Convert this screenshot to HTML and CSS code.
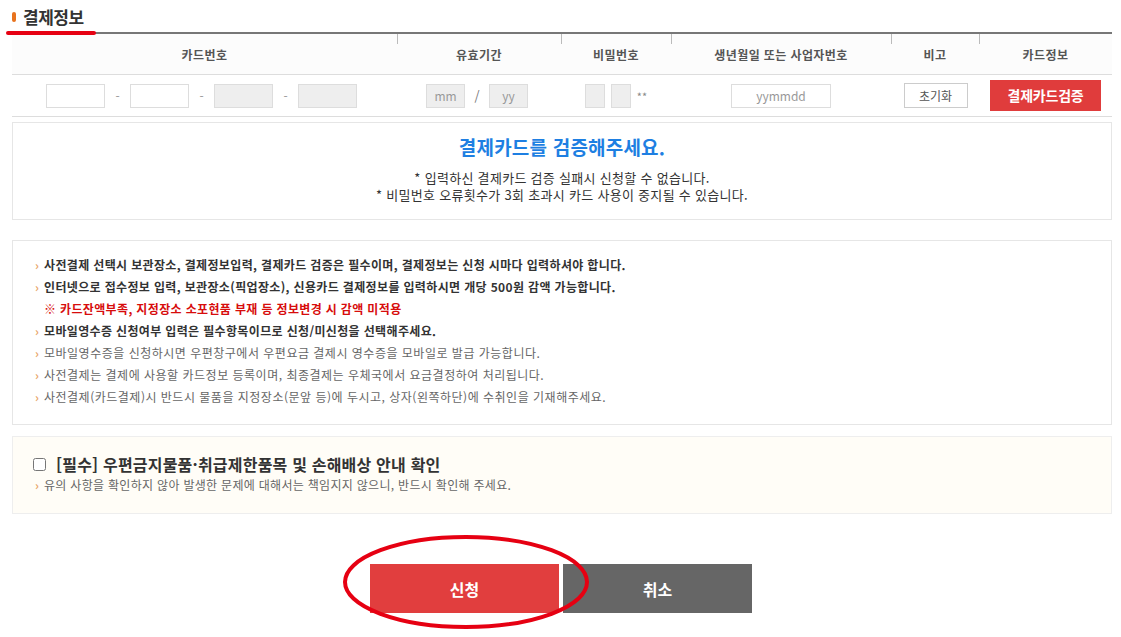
FILE: index.html
```html
<!DOCTYPE html>
<html lang="ko">
<head>
    <meta charset="UTF-8">
    <title>결제정보</title>
    <link rel="stylesheet" href="styles.css">
</head>
<body>
    <div class="wrap">
        <!-- 결제정보 -->
        <h3 class="sec-title"><span class="mark"></span>결제정보</h3>
        <table class="pay-table">
            <colgroup>
                <col style="width:385px"><col style="width:164px"><col style="width:110px">
                <col style="width:220px"><col style="width:88px"><col style="width:133px">
            </colgroup>
            <thead>
                <tr>
                    <th>카드번호</th>
                    <th>유효기간</th>
                    <th>비밀번호</th>
                    <th>생년월일 또는 사업자번호</th>
                    <th>비고</th>
                    <th>카드정보</th>
                </tr>
            </thead>
            <tbody>
                <tr>
                    <td>
                        <div class="card-no">
                            <input class="inp w59" type="text">
                            <span class="dash">-</span>
                            <input class="inp w59" type="text">
                            <span class="dash">-</span>
                            <input class="inp w59 off" type="password">
                            <span class="dash">-</span>
                            <input class="inp w59 off" type="password">
                        </div>
                    </td>
                    <td>
                        <div class="exp">
                            <span class="inp w39 off ph">mm</span>
                            <span class="slash">/</span>
                            <span class="inp w39 off ph">yy</span>
                        </div>
                    </td>
                    <td>
                        <div class="pw">
                            <span class="inp w19 off"></span>
                            <span class="inp w19 off"></span>
                            <span class="stars">**</span>
                        </div>
                    </td>
                    <td><input class="inp w99" type="text" placeholder="yymmdd"></td>
                    <td><button class="btn-reset" type="button">초기화</button></td>
                    <td><button class="btn-check" type="button">결제카드검증</button></td>
                </tr>
            </tbody>
        </table>

        <div class="verify-box">
            <p class="verify-title">결제카드를 검증해주세요.</p>
            <p>* 입력하신 결제카드 검증 실패시 신청할 수 없습니다.</p>
            <p>* 비밀번호 오류횟수가 3회 초과시 카드 사용이 중지될 수 있습니다.</p>
        </div>

        <ul class="notice-box">
            <li class="strong">사전결제 선택시 보관장소, 결제정보입력, 결제카드 검증은 필수이며, 결제정보는 신청 시마다 입력하셔야 합니다.</li>
            <li class="strong">인터넷으로 접수정보 입력, 보관장소(픽업장소), 신용카드 결제정보를 입력하시면 개당 500원 감액 가능합니다.</li>
            <li class="red">※ 카드잔액부족, 지정장소 소포현품 부재 등 정보변경 시 감액 미적용</li>
            <li class="strong">모바일영수증 신청여부 입력은 필수항목이므로 신청/미신청을 선택해주세요.</li>
            <li>모바일영수증을 신청하시면 우편창구에서 우편요금 결제시 영수증을 모바일로 발급 가능합니다.</li>
            <li>사전결제는 결제에 사용할 카드정보 등록이며, 최종결제는 우체국에서 요금결정하여 처리됩니다.</li>
            <li>사전결제(카드결제)시 반드시 물품을 지정장소(문앞 등)에 두시고, 상자(왼쪽하단)에 수취인을 기재해주세요.</li>
        </ul>

        <div class="agree-box">
            <label class="agree-title"><input type="checkbox" class="chk">[필수] 우편금지물품·취급제한품목 및 손해배상 안내 확인</label>
            <p class="agree-desc">유의 사항을 확인하지 않아 발생한 문제에 대해서는 책임지지 않으니, 반드시 확인해 주세요.</p>
        </div>

        <div class="btn-area">
            <button class="btn-apply" type="button">신청</button>
            <button class="btn-cancel" type="button">취소</button>
        </div>
    </div>

    <!-- 강조 표시 -->
    <span class="underline-mark"></span>
    <svg class="circle-mark" width="260" height="104" viewBox="0 0 260 104">
        <ellipse cx="130" cy="52" rx="121" ry="45" fill="none" stroke="#e60012" stroke-width="4"/>
    </svg>
</body>
</html>
```

FILE: styles.css
```css
body {
    margin: 0;
    padding: 0;
    background: #fff;
    color: #333;
    font-family: "Noto Sans CJK KR", "Noto Sans", sans-serif;
    font-size: 12px;
    position: relative;
}
.wrap {
    width: 1100px;
    margin-left: 12px;
    padding-bottom: 24px;
}
p { margin: 0; }

/* title */
.sec-title {
    display: flex;
    align-items: center;
    height: 32px;
    margin: 0;
    font-size: 17px;
    font-weight: bold;
    color: #333;
    letter-spacing: -0.5px;
}
.sec-title .mark {
    width: 4px;
    height: 10px;
    border-radius: 2px;
    background: #e8731e;
    margin-right: 7px;
    margin-top: 1px;
}

/* table */
.pay-table {
    width: 1100px;
    border-collapse: collapse;
    table-layout: fixed;
    border-top: 2px solid #777;
}
.pay-table th {
    height: 40px;
    padding: 0;
    font-size: 12px;
    font-weight: bold;
    color: #555;
    letter-spacing: 0.4px;
    background: #fcfcfc linear-gradient(#bbb, #bbb) left top / 1px 10px no-repeat;
    border-bottom: 1px solid #ddd;
}
.pay-table th:first-child {
    background-image: none;
}
.pay-table td {
    height: 41px;
    padding: 0;
    text-align: center;
    border-bottom: 1px solid #ddd;
}
.card-no, .exp, .pw {
    display: flex;
    align-items: center;
    justify-content: center;
}
.card-no { padding-right: 6px; }
.inp {
    box-sizing: border-box;
    height: 24px;
    border: 1px solid #ddd;
    background: #fff;
    padding: 0;
    font: 12px "Noto Sans CJK KR", sans-serif;
    color: #999;
    text-align: center;
}
.inp::placeholder { color: #999; }
.inp.off { background: #eee; }
.ph {
    display: inline-flex;
    align-items: center;
    justify-content: center;
    color: #999;
}
.w59 { width: 59px; }
.w39 { width: 39px; }
.w19 { width: 20px; display: inline-block; }
.w99 { width: 100px; }
.dash {
    width: 25px;
    color: #999;
    text-align: center;
}
.exp { padding-right: 4px; }
.slash {
    width: 24px;
    color: #777;
    font-size: 13px;
}
.pw { padding-right: 0; }
.pw .w19 + .w19 { margin-left: 6px; }
.stars {
    margin-left: 6px;
    color: #888;
    font-size: 11px;
}
.btn-reset {
    width: 64px;
    height: 25px;
    border: 1px solid #ccc;
    background: #fff;
    color: #555;
    font: 12px "Noto Sans CJK KR", sans-serif;
    padding: 0;
    margin-left: 1px;
}
.btn-check {
    width: 111px;
    height: 31px;
    border: 0;
    background: #e03c3c;
    color: #fff;
    font: bold 14px "Noto Sans CJK KR", sans-serif;
    padding: 0;
    margin: 0 0 1px;
    letter-spacing: -0.2px;
}

/* verify */
.verify-box {
    margin-top: 5px;
    border: 1px solid #e6e6e6;
    padding: 12px 0 16px;
    text-align: center;
    color: #333;
    font-size: 13px;
    letter-spacing: 0.3px;
    line-height: 17px;
}
.verify-title {
    font-size: 19px;
    font-weight: bold;
    color: #1e7fe2;
    line-height: 24px;
    margin-bottom: 10px;
    letter-spacing: 0.2px;
}

/* notice */
.notice-box {
    list-style: none;
    margin: 20px 0 0;
    border: 1px solid #e6e6e6;
    padding: 13px 0 16px 22px;
    line-height: 22px;
    color: #666;
    letter-spacing: 0.5px;
}
.notice-box li::before {
    content: "›";
    display: inline-block;
    width: 9px;
    color: #e8a56a;
    font-weight: bold;
}
.notice-box li.red::before { content: ""; }
.notice-box .strong {
    font-weight: bold;
    color: #333;
    letter-spacing: 0.35px;
}
.notice-box .red {
    font-weight: bold;
    color: #d70c0c;
    letter-spacing: 0.35px;
}

/* agree */
.agree-box {
    margin-top: 11px;
    border: 1px solid #eee;
    background: #fffdf7;
    padding: 16px 0 19px 19px;
}
.agree-title {
    display: flex;
    align-items: center;
    height: 22px;
    font-size: 16px;
    font-weight: bold;
    color: #333;
    letter-spacing: 0.2px;
}
.chk {
    width: 13px;
    height: 13px;
    margin: 0 10px 0 1px;
}
.agree-desc {
    margin-top: 1px;
    line-height: 18px;
    color: #666;
    letter-spacing: 0.3px;
    padding-left: 3px;
}
.agree-desc::before {
    content: "›";
    display: inline-block;
    width: 9px;
    color: #e8a56a;
    font-weight: bold;
}

/* buttons */
.btn-area {
    display: flex;
    justify-content: center;
    gap: 4px;
    margin-top: 50px;
    padding-right: 2px;
}
.btn-area button {
    width: 189px;
    height: 49px;
    border: 0;
    color: #fff;
    font: bold 16px "Noto Sans CJK KR", sans-serif;
}
.btn-apply { background: #e13e3e; }
.btn-cancel { background: #666; }

/* annotations */
.underline-mark {
    position: absolute;
    left: 6px;
    top: 31px;
    width: 90px;
    height: 4px;
    border-radius: 2px;
    background: #e60012;
}
.circle-mark {
    position: absolute;
    left: 336px;
    top: 530px;
}
```
